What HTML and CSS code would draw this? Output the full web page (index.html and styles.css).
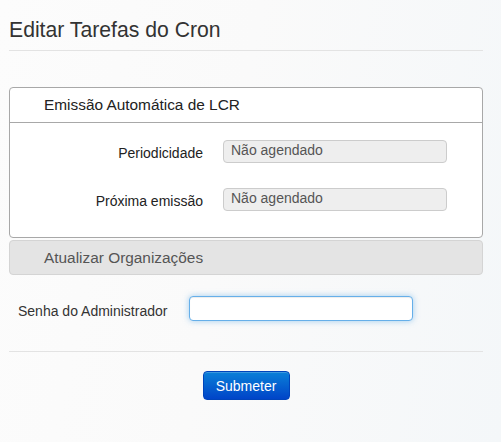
FILE: index.html
```html
<!DOCTYPE html>
<html lang="pt">
<head>
<meta charset="utf-8">
<title>Editar Tarefas do Cron</title>
<link rel="stylesheet" href="styles.css">
</head>
<body>
<div class="page">
  <h1 class="title">Editar Tarefas do Cron</h1>
  <hr class="rule">
  <div class="panel">
    <div class="panel-head">Emissão Automática de LCR</div>
    <div class="panel-body">
      <div class="row">
        <label class="row-label">Periodicidade</label>
        <div class="readonly">Não agendado</div>
      </div>
      <div class="row">
        <label class="row-label">Próxima emissão</label>
        <div class="readonly">Não agendado</div>
      </div>
    </div>
  </div>
  <div class="panel-collapsed">Atualizar Organizações</div>
  <div class="pass-row">
    <label class="pass-label" for="pw">Senha do Administrador</label>
    <input id="pw" class="pass-input" type="password">
  </div>
  <hr class="rule rule-bottom">
  <div class="actions">
    <button class="btn" type="button">Submeter</button>
  </div>
</div>
</body>
</html>
```
FILE: styles.css
```css
html, body {
  margin: 0;
  padding: 0;
}
body {
  width: 501px;
  height: 442px;
  overflow: hidden;
  font-family: "Liberation Sans", Arial, sans-serif;
  font-size: 14px;
  color: #333;
  background: linear-gradient(100deg, #fcfcfc 0%, #fafafa 45%, #f4f7f9 100%);
}
.page {
  width: 474px;
  padding: 18px 0 0 9px;
}
.title {
  margin: 0;
  font-size: 21.2px;
  font-weight: normal;
  line-height: 24px;
  color: #333;
}
.rule {
  margin: 8px 0 0 0;
  border: 0;
  border-top: 1px solid #e3e3e3;
  height: 0;
}
.panel {
  margin-top: 36px;
  background: #fff;
  border: 1px solid #a8a8a8;
  border-radius: 4px;
}
.panel-head {
  height: 34px;
  line-height: 34px;
  padding-left: 34px;
  border-bottom: 1px solid #a8a8a8;
  color: #222;
  font-size: 15.4px;
}
.panel-body {
  padding: 17px 0 26px 0;
  display: flex;
  flex-direction: column;
  gap: 25px;
}
.row {
  display: flex;
  align-items: flex-start;
  height: 23px;
}
.row-label {
  width: 193px;
  flex-shrink: 0;
  text-align: right;
  margin-top: 4px;
  line-height: 19px;
  color: #222;
}
.readonly {
  flex-shrink: 0;
  margin-left: 20px;
  width: 215px;
  height: 21px;
  line-height: 19px;
  padding: 0 0 0 7px;
  background: #eee;
  border: 1px solid #ccc;
  border-radius: 4px;
  color: #555;
}
.panel-collapsed {
  margin-top: 2px;
  height: 33px;
  line-height: 33px;
  padding-left: 34px;
  background: #e4e4e4;
  border: 1px solid #d4d4d4;
  border-radius: 4px;
  color: #555;
  font-size: 15.4px;
}
.pass-row {
  display: flex;
  align-items: center;
  margin-top: 21px;
  padding-left: 9px;
}
.pass-label {
  width: 171px;
  flex-shrink: 0;
  color: #333;
  padding-top: 4px;
}
.pass-input {
  box-sizing: border-box;
  width: 224px;
  height: 25px;
  margin: 0;
  border: 1px solid #66afe9;
  border-radius: 4px;
  background: #fff;
  outline: none;
  box-shadow: inset 0 1px 1px rgba(0,0,0,.075), 0 0 6px rgba(102,175,233,.6);
}
.rule-bottom {
  margin-top: 30px;
}
.actions {
  display: flex;
  justify-content: center;
  padding-top: 19px;
}
.btn {
  width: 87px;
  height: 29px;
  padding: 0;
  font-family: "Liberation Sans", Arial, sans-serif;
  font-size: 14px;
  color: #fff;
  border: 1px solid #0044bb;
  border-radius: 4px;
  background: linear-gradient(#0a80d8, #0044c8);
  box-shadow: inset 0 1px 0 rgba(255,255,255,.2);
}
```
